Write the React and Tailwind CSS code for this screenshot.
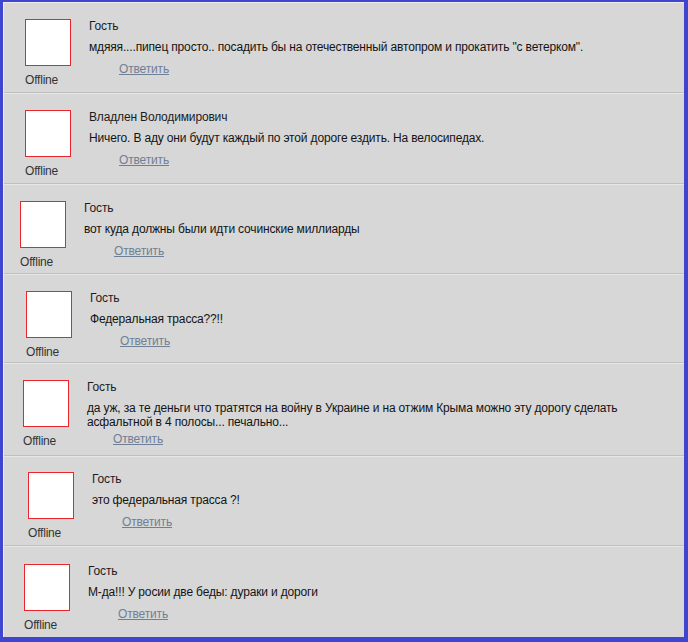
const comments = [
  {
    name: "Гость",
    text: "мдяяя....пипец просто.. посадить бы на отечественный автопром и прокатить \"с ветерком\".",
    row: "h-[89px] pl-[21px] pt-[16px]",
    link: "mt-[8px] pl-[30px]",
  },
  {
    name: "Владлен Володимирович",
    text: "Ничего. В аду они будут каждый по этой дороге ездить. На велосипедах.",
    row: "h-[89px] pl-[21px] pt-[16px]",
    link: "mt-[8px] pl-[30px]",
  },
  {
    name: "Гость",
    text: "вот куда должны были идти сочинские миллиарды",
    row: "h-[88px] pl-[16px] pt-[16px]",
    link: "mt-[8px] pl-[30px]",
  },
  {
    name: "Гость",
    text: "Федеральная трасса??!!",
    row: "h-[87px] pl-[22px] pt-[16px]",
    link: "mt-[8px] pl-[30px]",
  },
  {
    name: "Гость",
    text: "да уж, за те деньги что тратятся на войну в Украине и на отжим Крыма можно эту дорогу сделать асфальтной в 4 полосы... печально...",
    row: "h-[91px] pl-[19px] pt-[16px]",
    link: "mt-[3px] pl-[26px]",
  },
  {
    name: "Гость",
    text: "это федеральная трасса ?!",
    row: "h-[88px] pl-[24px] pt-[15px]",
    link: "mt-[8px] pl-[30px]",
  },
  {
    name: "Гость",
    text: "М-да!!! У росии две беды: дураки и дороги",
    row: "h-[90px] pl-[20px] pt-[17px]",
    link: "mt-[8px] pl-[30px]",
  },
];

function Comment({ c }) {
  return (
    <div className={`flex ${c.row}`}>
      <div className="w-[46px] shrink-0">
        <div className="w-[46px] h-[47px] border border-[#e8262b] bg-white" />
        <p className="mt-[7px] text-[12px] leading-[14px] text-[#333] tracking-[-0.2px] whitespace-nowrap">Offline</p>
      </div>
      <div className="ml-[18px] w-[545px] tracking-[-0.16px]">
        <p className="text-[12px] leading-[14px] text-[#1c1c1c]">{c.name}</p>
        <p className="mt-[7px] text-[12px] leading-[14px] text-[#141414]">{c.text}</p>
        <div className={`text-[12px] leading-[14px] ${c.link}`}>
          <a href="#" className="text-[#6f8096] underline">
            Ответить
          </a>
        </div>
      </div>
    </div>
  );
}

export default function App() {
  return (
    <div
      className="w-[688px] h-[642px] bg-[#3f45cf] pl-[3px] pt-[2px] pr-[4px] pb-[5px]"
      style={{ fontFamily: '"Liberation Sans", Arial, sans-serif' }}
    >
      <div className="h-full bg-[#d7d7d7] border-t border-l border-[#ececec] overflow-hidden">
        {comments.map((c, i) => (
          <div key={i}>
            {i > 0 && (
              <div>
                <div className="h-px bg-[#bfbfbf]" />
                <div className="h-px bg-[#e6e6e6]" />
              </div>
            )}
            <Comment c={c} />
          </div>
        ))}
      </div>
    </div>
  );
}
